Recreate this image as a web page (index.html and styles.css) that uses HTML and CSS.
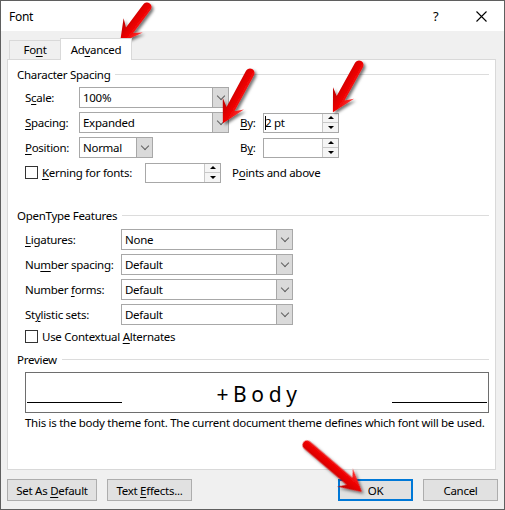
FILE: index.html
```html
<!DOCTYPE html>
<html lang="en">
<head>
    <meta charset="UTF-8">
    <title>Font</title>
    <link rel="stylesheet" href="styles.css">
</head>
<body>
    <div class="window">
        <div class="titlebar">
            <span class="title">Font</span>
            <span class="help">?</span>
            <span class="close">
                <svg width="11" height="11" viewBox="0 0 11 11"><path d="M0.5 0.5 L10.5 10.5 M10.5 0.5 L0.5 10.5" stroke="#000" stroke-width="1.1" fill="none"/></svg>
            </span>
        </div>

        <div class="client">
            <div class="tabs">
                <div class="tab">Fo<u>n</u>t</div>
                <div class="tab active">Ad<u>v</u>anced</div>
            </div>

            <div class="panel">
                <div class="group-title first"><span>Character Spacing</span></div>
                <div class="rows">
                    <div class="row">
                        <label class="lbl w-short">S<u>c</u>ale:</label>
                        <div class="combo w-150"><span class="val">100%</span><span class="drop"><i class="chev"></i></span></div>
                    </div>
                    <div class="row">
                        <label class="lbl w-short"><u>S</u>pacing:</label>
                        <div class="combo w-150"><span class="val">Expanded</span><span class="drop"><i class="chev"></i></span></div>
                        <label class="lbl by by-1"><u>B</u>y:</label>
                        <div class="spin"><span class="val"><span class="caret"></span>2 pt</span><span class="arrows-btn"><i class="up"></i><i class="down"></i></span></div>
                    </div>
                    <div class="row">
                        <label class="lbl w-short"><u>P</u>osition:</label>
                        <div class="combo w-74"><span class="val">Normal</span><span class="drop"><i class="chev"></i></span></div>
                        <label class="lbl by by-2">B<u>y</u>:</label>
                        <div class="spin"><span class="val"></span><span class="arrows-btn"><i class="up"></i><i class="down"></i></span></div>
                    </div>
                    <div class="row">
                        <span class="check"></span>
                        <label class="lbl w-kern"><u>K</u>erning for fonts:</label>
                        <div class="spin"><span class="val"></span><span class="arrows-btn"><i class="up"></i><i class="down"></i></span></div>
                        <span class="lbl after">P<u>o</u>ints and above</span>
                    </div>
                </div>

                <div class="group-title second"><span>OpenType Features</span></div>
                <div class="rows ot">
                    <div class="row">
                        <label class="lbl w-long"><u>L</u>igatures:</label>
                        <div class="combo w-172"><span class="val">None</span><span class="drop"><i class="chev"></i></span></div>
                    </div>
                    <div class="row">
                        <label class="lbl w-long">Nu<u>m</u>ber spacing:</label>
                        <div class="combo w-172"><span class="val">Default</span><span class="drop"><i class="chev"></i></span></div>
                    </div>
                    <div class="row">
                        <label class="lbl w-long">Number <u>f</u>orms:</label>
                        <div class="combo w-172"><span class="val">Default</span><span class="drop"><i class="chev"></i></span></div>
                    </div>
                    <div class="row">
                        <label class="lbl w-long">St<u>y</u>listic sets:</label>
                        <div class="combo w-172"><span class="val">Default</span><span class="drop"><i class="chev"></i></span></div>
                    </div>
                </div>
                <div class="row check-row">
                    <span class="check"></span>
                    <label class="lbl">Use Contextual <u>A</u>lternates</label>
                </div>

                <div class="group-title third"><span>Preview</span></div>
                <div class="preview">
                    <span class="rule"></span>
                    <span class="sample">+Body</span>
                    <span class="rule"></span>
                </div>
                <p class="desc">This is the body theme font. The current document theme defines which font will be used.</p>
            </div>

            <div class="buttons">
                <button class="btn btn-default">Set As <u>D</u>efault</button>
                <button class="btn btn-effects">Text <u>E</u>ffects...</button>
                <button class="btn btn-ok">OK</button>
                <button class="btn">Cancel</button>
            </div>
        </div>

        <!-- callout arrows drawn over the dialog -->
        <svg class="callouts" width="505" height="510" viewBox="0 0 505 510">
            <defs>
                <linearGradient id="redGrad" x1="0" y1="0" x2="0" y2="1">
                    <stop offset="0" stop-color="#ff3b3b"/>
                    <stop offset="0.45" stop-color="#ee0000"/>
                    <stop offset="1" stop-color="#b80000"/>
                </linearGradient>
                <filter id="shadow" x="-30%" y="-30%" width="160%" height="160%">
                    <feDropShadow dx="2" dy="2" stdDeviation="1.6" flood-color="#000" flood-opacity="0.55"/>
                </filter>
            </defs>
            <g filter="url(#shadow)" fill="url(#redGrad)">
                <path transform="translate(147 7) rotate(126.9)" d="M0,-4.5 L29,-4.5 L23,-12 L45,0 L23,12 L29,4.5 L0,4.5 A4.5 4.5 0 0 1 0,-4.5 Z"/>
                <path transform="translate(250 73) rotate(118.4)" d="M0,-4.5 L41,-4.5 L35,-12 L57,0 L35,12 L41,4.5 L0,4.5 A4.5 4.5 0 0 1 0,-4.5 Z"/>
                <path transform="translate(359 65) rotate(118.9)" d="M0,-4.5 L38,-4.5 L32,-12 L54,0 L32,12 L38,4.5 L0,4.5 A4.5 4.5 0 0 1 0,-4.5 Z"/>
                <path transform="translate(307 445) rotate(40.5)" d="M0,-4.5 L56,-4.5 L50,-12 L72,0 L50,12 L56,4.5 L0,4.5 A4.5 4.5 0 0 1 0,-4.5 Z"/>
            </g>
        </svg>
    </div>
</body>
</html>
```

FILE: styles.css
```css
body {
    margin: 0;
    padding: 0;
    background: #fff;
    font-family: "Noto Sans", "Open Sans", sans-serif;
    font-size: 11.5px;
    letter-spacing: -0.28px;
    color: #000;
}

.window {
    position: relative;
    width: 505px;
    height: 510px;
    box-sizing: border-box;
    border: 1px solid #5f5f5f;
    display: flex;
    flex-direction: column;
    overflow: hidden;
}

u {
    text-underline-offset: 2px;
}

/* title bar */
.titlebar {
    height: 30px;
    background: #fff;
    display: flex;
    align-items: center;
    padding-left: 8px;
}

.title {
    flex: 1;
    font-size: 12px;
}

.help {
    font-size: 13px;
    width: 10px;
    margin-right: 33px;
}

.close {
    width: 11px;
    height: 11px;
    margin-right: 17px;
    display: flex;
}

/* client area */
.client {
    flex: 1;
    background: #f0f0f0;
    padding: 7px 0 0 6px;
    display: flex;
    flex-direction: column;
}

.tabs {
    display: flex;
    align-items: flex-start;
    height: 22px;
    padding-left: 2px;
    position: relative;
    z-index: 1;
}

.tab {
    box-sizing: border-box;
    border: 1px solid #d9d9d9;
    border-bottom: none;
    background: #f0f0f0;
    text-align: center;
    line-height: 18px;
}

.tab:first-child {
    width: 51px;
    height: 19px;
    margin-top: 2px;
    border-right: none;
}

.tab.active {
    width: 72px;
    height: 22px;
    background: #fff;
    line-height: 22px;
}

.panel {
    width: 489px;
    height: 411px;
    box-sizing: border-box;
    margin-top: -1px;
    border: 1px solid #d9d9d9;
    background: #fff;
    padding: 0 6px 0 0;
}

.group-title {
    display: flex;
    align-items: center;
    gap: 5px;
    height: 16px;
    padding-left: 9px;
}

.group-title::after {
    content: "";
    flex: 1;
    height: 1px;
    background: #dcdcdc;
}

.group-title.first { margin-top: 6px; }
.group-title.second { margin-top: 24px; }
.group-title.third { margin-top: 7px; }

.rows {
    display: flex;
    flex-direction: column;
    gap: 4px;
    margin-top: 5px;
    padding-left: 17px;
}

.rows.ot {
    margin-top: 6px;
}

.row {
    display: flex;
    align-items: center;
    height: 21px;
}

.lbl {
    white-space: nowrap;
}

.w-short { width: 54px; }
.w-long { width: 96px; }
.w-kern { width: 103px; }
.by { width: 23px; }
.by-1 { margin-left: 11px; }
.by-2 { margin-left: 87px; }
.after { margin-left: 11px; }

.w-150 { width: 150px; }
.w-74 { width: 74px; }
.w-172 { width: 172px; height: 20px; }

.combo {
    display: flex;
    height: 21px;
    box-sizing: border-box;
    border: 1px solid #a8a8a8;
    background: #fff;
}

.combo .val {
    flex: 1;
    padding-left: 3px;
    display: flex;
    align-items: center;
}

.combo .drop {
    width: 15px;
    background: #dadada;
    border-left: 1px solid #a8a8a8;
    display: flex;
    align-items: center;
    justify-content: center;
}

.chev {
    width: 5px;
    height: 5px;
    border-right: 1px solid #606060;
    border-bottom: 1px solid #606060;
    transform: translateY(-2px) rotate(45deg);
}

.spin {
    display: flex;
    width: 76px;
    height: 20px;
    box-sizing: border-box;
    border: 1px solid #a8a8a8;
    background: #fff;
}

.spin .val {
    flex: 1;
    display: flex;
    align-items: center;
    padding-left: 1px;
}

.caret {
    width: 1px;
    height: 14px;
    background: #000;
    margin-right: -1px;
}

.arrows-btn {
    width: 15px;
    display: flex;
    flex-direction: column;
    border-left: 1px solid #c8c8c8;
}

.arrows-btn i {
    flex: 1;
    display: flex;
    align-items: center;
    justify-content: center;
    background: #f5f5f5;
}

.arrows-btn i + i {
    border-top: 1px solid #c8c8c8;
}

.arrows-btn .up::before,
.arrows-btn .down::before {
    content: "";
    border-left: 3px solid transparent;
    border-right: 3px solid transparent;
}

.arrows-btn .up::before {
    border-bottom: 3px solid #000;
}

.arrows-btn .down::before {
    border-top: 3px solid #000;
}

.check {
    width: 13px;
    height: 13px;
    box-sizing: border-box;
    border: 1px solid #333;
    background: #fff;
    margin-right: 4px;
}

.check-row {
    height: 16px;
    margin-top: 3px;
    padding-left: 17px;
}

/* preview */
.preview {
    display: flex;
    align-items: flex-end;
    justify-content: space-between;
    height: 41px;
    box-sizing: border-box;
    margin: 5px 0 0 17px;
    border: 1px solid #6e6e6e;
    padding: 0 1px 9px 1px;
}

.rule {
    width: 95px;
    height: 1px;
    background: #000;
}

.sample {
    font-size: 21px;
    letter-spacing: 4.6px;
    padding-left: 4px;
    line-height: 24px;
    margin-bottom: -3px;
}

.desc {
    margin: 2px 0 0 17px;
    line-height: 16px;
    white-space: nowrap;
}

/* bottom buttons */
.buttons {
    display: flex;
    gap: 10px;
    margin-top: 9px;
    padding-right: 6px;
}

.btn {
    height: 22px;
    box-sizing: border-box;
    border: 1px solid #adadad;
    background: #e1e1e1;
    font-family: inherit;
    font-size: 11.5px;
    letter-spacing: -0.28px;
    color: #000;
    padding: 0;
    width: 75px;
}

.btn-default { width: 90px; }
.btn-effects { width: 85px; }

.btn-ok {
    margin-left: auto;
    border: 2px solid #0078d7;
}

.callouts {
    position: absolute;
    top: -1px;
    left: -1px;
    pointer-events: none;
}
```
